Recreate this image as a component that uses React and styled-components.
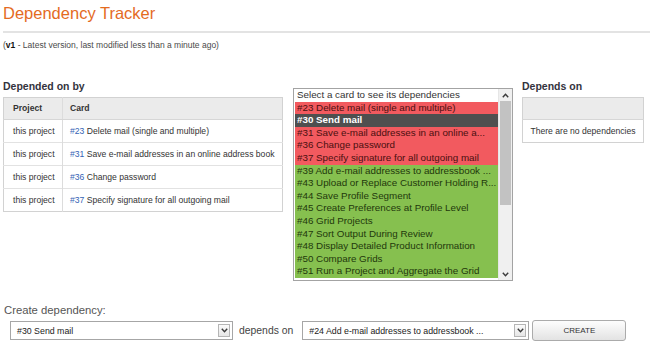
import React from 'react';
import styled, { createGlobalStyle } from 'styled-components';

const GlobalStyle = createGlobalStyle`
  html, body {
    margin: 0;
    padding: 0;
    background: #ffffff;
    font-family: "Liberation Sans", Arial, sans-serif;
    color: #333333;
  }
`;

const dependedOnBy = [
  { project: 'this project', id: '#23', title: 'Delete mail (single and multiple)' },
  { project: 'this project', id: '#31', title: 'Save e-mail addresses in an online address book' },
  { project: 'this project', id: '#36', title: 'Change password' },
  { project: 'this project', id: '#37', title: 'Specify signature for all outgoing mail' },
];

const cards = [
  { label: 'Select a card to see its dependencies', kind: 'plain' },
  { label: '#23 Delete mail (single and multiple)', kind: 'red' },
  { label: '#30 Send mail', kind: 'selected' },
  { label: '#31 Save e-mail addresses in an online a...', kind: 'red' },
  { label: '#36 Change password', kind: 'red' },
  { label: '#37 Specify signature for all outgoing mail', kind: 'red' },
  { label: '#39 Add e-mail addresses to addressbook ...', kind: 'green' },
  { label: '#43 Upload or Replace Customer Holding R...', kind: 'green' },
  { label: '#44 Save Profile Segment', kind: 'green' },
  { label: '#45 Create Preferences at Profile Level', kind: 'green' },
  { label: '#46 Grid Projects', kind: 'green' },
  { label: '#47 Sort Output During Review', kind: 'green' },
  { label: '#48 Display Detailed Product Information', kind: 'green' },
  { label: '#50 Compare Grids', kind: 'green' },
  { label: '#51 Run a Project and Aggregate the Grid', kind: 'green' },
];

const rowColors = {
  plain: { bg: '#ffffff', fg: '#333333', weight: 400 },
  red: { bg: '#f25a5f', fg: '#4a1010', weight: 400 },
  green: { bg: '#86c04f', fg: '#1f380c', weight: 400 },
  selected: { bg: '#4f4f4f', fg: '#ffffff', weight: 700 },
};

const Page = styled.div`
  width: 650px;
  height: 345px;
  overflow: hidden;
  padding: 3px 0 0 3px;
  box-sizing: border-box;
`;

const Title = styled.h1`
  margin: 0;
  font-size: 16.5px;
  line-height: 20px;
  font-weight: 400;
  color: #e46b1f;
`;

const Divider = styled.div`
  margin-top: 8px;
  height: 2px;
  background: #e3e3e3;
`;

const Meta = styled.div`
  margin-top: 6px;
  font-size: 8.5px;
  line-height: 12px;
  color: #4a4a4a;

  b {
    color: #111111;
  }
`;

const Columns = styled.div`
  display: flex;
  align-items: flex-start;
  margin-top: 29px;
`;

const Side = styled.section`
  width: ${(p) => p.width}px;
  margin-right: ${(p) => p.gap || 0}px;
  flex: none;
`;

const Heading = styled.h2`
  margin: 0 0 3.5px;
  font-size: 10.5px;
  line-height: 13px;
  font-weight: 700;
  color: #33333d;
`;

const Table = styled.table`
  width: 100%;
  border-collapse: collapse;
  border: 1px solid #d2d2d2;
  font-size: 8.6px;
  color: #333333;

  th {
    background: #ebebeb;
    height: 21px;
    text-align: left;
    font-weight: 700;
    padding: 0 0 0 9px;
    border-bottom: 1px solid #d6d6d6;
  }

  td {
    height: 22px;
    padding: 0 0 0 9px;
    border-top: 1px solid #e2e2e2;
    white-space: nowrap;
  }

  th + th,
  td + td {
    border-left: 1px solid #dcdcdc;
    padding-left: 7px;
  }
`;

const CardLink = styled.span`
  color: #3563b5;
`;

const Empty = styled.td`
  text-align: center;
  padding: 0 !important;
`;

const ListBox = styled.div`
  width: 220px;
  height: 193px;
  margin-top: 8px;
  margin-right: 9px;
  flex: none;
  box-sizing: border-box;
  border: 1px solid #a3a3a3;
  display: flex;
  background: #ffffff;
`;

const Options = styled.div`
  flex: 1;
  padding: 0 0 0 1px;
  overflow: hidden;
`;

const Option = styled.div`
  height: 12.6px;
  line-height: 12.6px;
  font-size: 9.8px;
  padding-left: 2px;
  white-space: nowrap;
  overflow: hidden;
  background: ${(p) => rowColors[p.kind].bg};
  color: ${(p) => rowColors[p.kind].fg};
  font-weight: ${(p) => rowColors[p.kind].weight};
`;

const ScrollTrack = styled.div`
  width: 13px;
  flex: none;
  background: #f0f0f0;
  border-left: 1px solid #e6e6e6;
  display: flex;
  flex-direction: column;
  align-items: center;
`;

const ScrollArrow = styled.div`
  height: 12px;
  width: 100%;
  display: flex;
  align-items: center;
  justify-content: center;
`;

const ScrollThumb = styled.div`
  width: 11px;
  height: 104px;
  background: #c2c2c2;
`;

const ScrollFill = styled.div`
  flex: 1;
`;

const CreateLabel = styled.div`
  margin-top: 22px;
  padding-left: 1px;
  font-size: 11.3px;
  line-height: 14px;
  color: #555555;
`;

const CreateRow = styled.div`
  display: flex;
  align-items: center;
  margin-top: 3px;
  padding-left: 7px;
`;

const Select = styled.div`
  width: ${(p) => p.width}px;
  height: 19px;
  box-sizing: border-box;
  border: 1px solid #a6a6a6;
  background: #ffffff;
  display: flex;
  align-items: center;
  font-size: 8.8px;
  color: #222222;
  flex: none;
`;

const SelectText = styled.span`
  flex: 1;
  padding-left: 6px;
  white-space: nowrap;
  overflow: hidden;
`;

const SelectArrow = styled.span`
  width: 12px;
  height: 13px;
  margin-right: 2px;
  box-sizing: border-box;
  border: 1px solid #b5b5b5;
  background: linear-gradient(#fbfbfb, #e6e6e6);
  display: flex;
  align-items: center;
  justify-content: center;
`;

const Joiner = styled.span`
  font-size: 10.4px;
  color: #444444;
  margin: 0 9px 0 6px;
`;

const Button = styled.button`
  margin-left: 3px;
  width: 94px;
  height: 21px;
  border: 1px solid #ababab;
  border-radius: 3px;
  background: linear-gradient(#fdfdfd, #e3e3e3);
  font-family: inherit;
  font-size: 8px;
  color: #333333;
  padding: 0;
`;

const Chevron = ({ up }) => (
  <svg width="7" height="5" viewBox="0 0 7 5">
    <path
      d={up ? 'M0.8 4.2 L3.5 1.2 L6.2 4.2' : 'M0.8 0.8 L3.5 3.8 L6.2 0.8'}
      fill="none"
      stroke="#3a3a3a"
      strokeWidth="1.4"
    />
  </svg>
);

export default function App() {
  return (
    <>
      <GlobalStyle />
      <Page>
        <Title>Dependency Tracker</Title>
        <Divider />
        <Meta>
          (<b>v1</b> - Latest version, last modified less than a minute ago)
        </Meta>

        <Columns>
          <Side width={280} gap={10}>
            <Heading>Depended on by</Heading>
            <Table>
              <colgroup>
                <col style={{ width: 59 }} />
                <col />
              </colgroup>
              <thead>
                <tr>
                  <th>Project</th>
                  <th>Card</th>
                </tr>
              </thead>
              <tbody>
                {dependedOnBy.map((row) => (
                  <tr key={row.id}>
                    <td>{row.project}</td>
                    <td>
                      <CardLink>{row.id}</CardLink> {row.title}
                    </td>
                  </tr>
                ))}
              </tbody>
            </Table>
          </Side>

          <ListBox>
            <Options>
              {cards.map((c) => (
                <Option key={c.label} kind={c.kind}>
                  {c.label}
                </Option>
              ))}
            </Options>
            <ScrollTrack>
              <ScrollArrow>
                <Chevron up />
              </ScrollArrow>
              <ScrollThumb />
              <ScrollFill />
              <ScrollArrow>
                <Chevron />
              </ScrollArrow>
            </ScrollTrack>
          </ListBox>

          <Side width={122}>
            <Heading>Depends on</Heading>
            <Table>
              <thead>
                <tr>
                  <th />
                </tr>
              </thead>
              <tbody>
                <tr>
                  <Empty>There are no dependencies</Empty>
                </tr>
              </tbody>
            </Table>
          </Side>
        </Columns>

        <CreateLabel>Create dependency:</CreateLabel>
        <CreateRow>
          <Select width={223}>
            <SelectText>#30 Send mail</SelectText>
            <SelectArrow>
              <Chevron />
            </SelectArrow>
          </Select>
          <Joiner>depends on</Joiner>
          <Select width={227}>
            <SelectText>#24 Add e-mail addresses to addressbook ...</SelectText>
            <SelectArrow>
              <Chevron />
            </SelectArrow>
          </Select>
          <Button>CREATE</Button>
        </CreateRow>
      </Page>
    </>
  );
}
